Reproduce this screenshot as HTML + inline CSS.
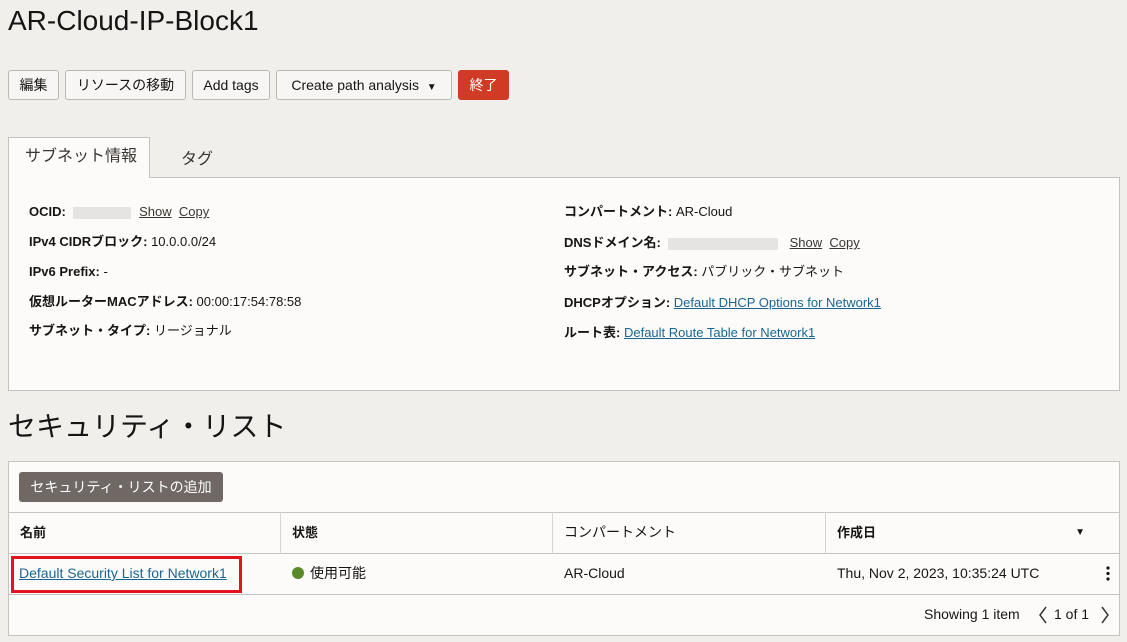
<!DOCTYPE html>
<html><head><meta charset="utf-8"><style>
body{margin:0;width:1127px;height:642px;overflow:hidden;background:#f1efec;font-family:"Liberation Sans","Noto Sans CJK JP",sans-serif;color:#161513;position:relative}
.a{position:absolute}
.btn{position:absolute;top:70px;height:28px;border:1px solid #bcb8b3;border-radius:3px;background:#f7f6f4;font-size:14px;line-height:28px;text-align:center;color:#161513;box-sizing:content-box}
.lbl{position:absolute;font-size:13px;line-height:16px}
.lbl b{font-weight:bold}
a{color:#1b6690;text-decoration:underline}
.u{color:#3a3631;text-decoration:underline}
.col{position:absolute;top:512px;height:41px;border-right:1px solid #d9d6d2;font-size:14px;line-height:41px;padding-left:11px;box-sizing:border-box}
</style></head><body>
<div class="a" style="left:8px;top:5px;font-size:28px">AR-Cloud-IP-Block1</div>
<div class="btn" style="left:8px;width:49px">編集</div>
<div class="btn" style="left:65px;width:119px">リソースの移動</div>
<div class="btn" style="left:192px;width:76px">Add tags</div>
<div class="btn" style="left:276px;width:174px">Create path analysis&nbsp;&nbsp;<span style="font-size:10px">▼</span></div>
<div class="btn" style="left:458px;width:49px;background:#d03b26;border-color:#d03b26;color:#fff">終了</div>
<div class="a" style="left:8px;top:177px;width:1110px;height:212px;background:#fcfbfa;border:1px solid #c6c2be"></div>
<div class="a" style="left:8px;top:137px;width:142px;height:41px;background:#fcfbfa;border:1px solid #c6c2be;border-bottom:none;font-size:16px;line-height:38px;text-align:center;color:#3a3631;padding-left:4px;box-sizing:border-box">サブネット情報</div>
<div class="a" style="left:181px;top:145px;font-size:16px;color:#3a3631">タグ</div>
<div class="lbl" style="left:29px;top:204px"><b>OCID:</b> <span style="display:inline-block;width:58px;height:12px;background:#e6e4e2;vertical-align:middle;margin:0 4px"></span> <span class="u">Show</span>&nbsp; <span class="u">Copy</span></div>
<div class="lbl" style="left:29px;top:234px"><b>IPv4 CIDRブロック:</b> 10.0.0.0/24</div>
<div class="lbl" style="left:29px;top:264px"><b>IPv6 Prefix:</b> -</div>
<div class="lbl" style="left:29px;top:294px"><b>仮想ルーターMACアドレス:</b> 00:00:17:54:78:58</div>
<div class="lbl" style="left:29px;top:323px"><b>サブネット・タイプ:</b> リージョナル</div>
<div class="lbl" style="left:564px;top:204px"><b>コンパートメント:</b> AR-Cloud</div>
<div class="lbl" style="left:564px;top:235px"><b>DNSドメイン名:</b> <span style="display:inline-block;width:110px;height:12px;background:#e6e4e2;vertical-align:middle;margin:0 4px"></span>&nbsp; <span class="u">Show</span>&nbsp; <span class="u">Copy</span></div>
<div class="lbl" style="left:564px;top:264px"><b>サブネット・アクセス:</b> パブリック・サブネット</div>
<div class="lbl" style="left:564px;top:295px"><b>DHCPオプション:</b> <a>Default DHCP Options for Network1</a></div>
<div class="lbl" style="left:564px;top:325px"><b>ルート表:</b> <a>Default Route Table for Network1</a></div>
<div class="a" style="left:8px;top:405px;font-size:28px;color:#161513">セキュリティ・リスト</div>
<div class="a" style="left:8px;top:461px;width:1110px;height:173px;background:#fcfbfa;border:1px solid #c6c2be"></div>
<div class="a" style="left:19px;top:472px;width:204px;height:30px;background:#6f6864;border-radius:3px;color:#fff;font-size:14px;line-height:30px;text-align:center">セキュリティ・リストの追加</div>
<div class="a" style="left:9px;top:512px;width:1110px;height:0;border-top:1px solid #c6c2be"></div>
<div class="a" style="left:9px;top:553px;width:1110px;height:0;border-top:1px solid #c6c2be"></div>
<div class="a" style="left:9px;top:594px;width:1110px;height:0;border-top:1px solid #c6c2be"></div>
<div class="col" style="left:9px;width:272px;font-weight:bold;font-size:13px">名前</div>
<div class="col" style="left:281px;width:272px;font-weight:bold;font-size:13px">状態</div>
<div class="col" style="left:553px;width:273px;font-size:14px">コンパートメント</div>
<div class="col" style="left:826px;width:293px;border-right:none;font-weight:bold;font-size:13px">作成日<span style="position:absolute;right:34px;font-size:10px;font-weight:normal">▼</span></div>
<div class="a" style="left:11px;top:556px;width:225px;height:31px;border:3px solid #e3141f"></div>
<div class="a" style="left:19px;top:565px;font-size:14px"><a>Default Security List for Network1</a></div>
<div class="a" style="left:292px;top:567px;width:12px;height:12px;border-radius:50%;background:#5a8a2a"></div>
<div class="a" style="left:310px;top:564px;font-size:14px;line-height:18px">使用可能</div>
<div class="a" style="left:564px;top:565px;font-size:14px">AR-Cloud</div>
<div class="a" style="left:837px;top:565px;font-size:14px">Thu, Nov 2, 2023, 10:35:24 UTC</div>
<svg class="a" style="left:1105px;top:566px" width="6" height="16"><circle cx="3" cy="2" r="1.6" fill="#161513"/><circle cx="3" cy="7.5" r="1.6" fill="#161513"/><circle cx="3" cy="13" r="1.6" fill="#161513"/></svg>
<div class="a" style="left:924px;top:606px;font-size:14px">Showing 1 item</div>
<svg class="a" style="left:1038px;top:606px" width="10" height="18"><path d="M8 1 L2 9 L8 17" stroke="#3a3631" stroke-width="1.5" fill="none"/></svg>
<div class="a" style="left:1054px;top:606px;font-size:14px">1 of 1</div>
<svg class="a" style="left:1100px;top:606px" width="10" height="18"><path d="M2 1 L8 9 L2 17" stroke="#3a3631" stroke-width="1.5" fill="none"/></svg>
</body></html>
